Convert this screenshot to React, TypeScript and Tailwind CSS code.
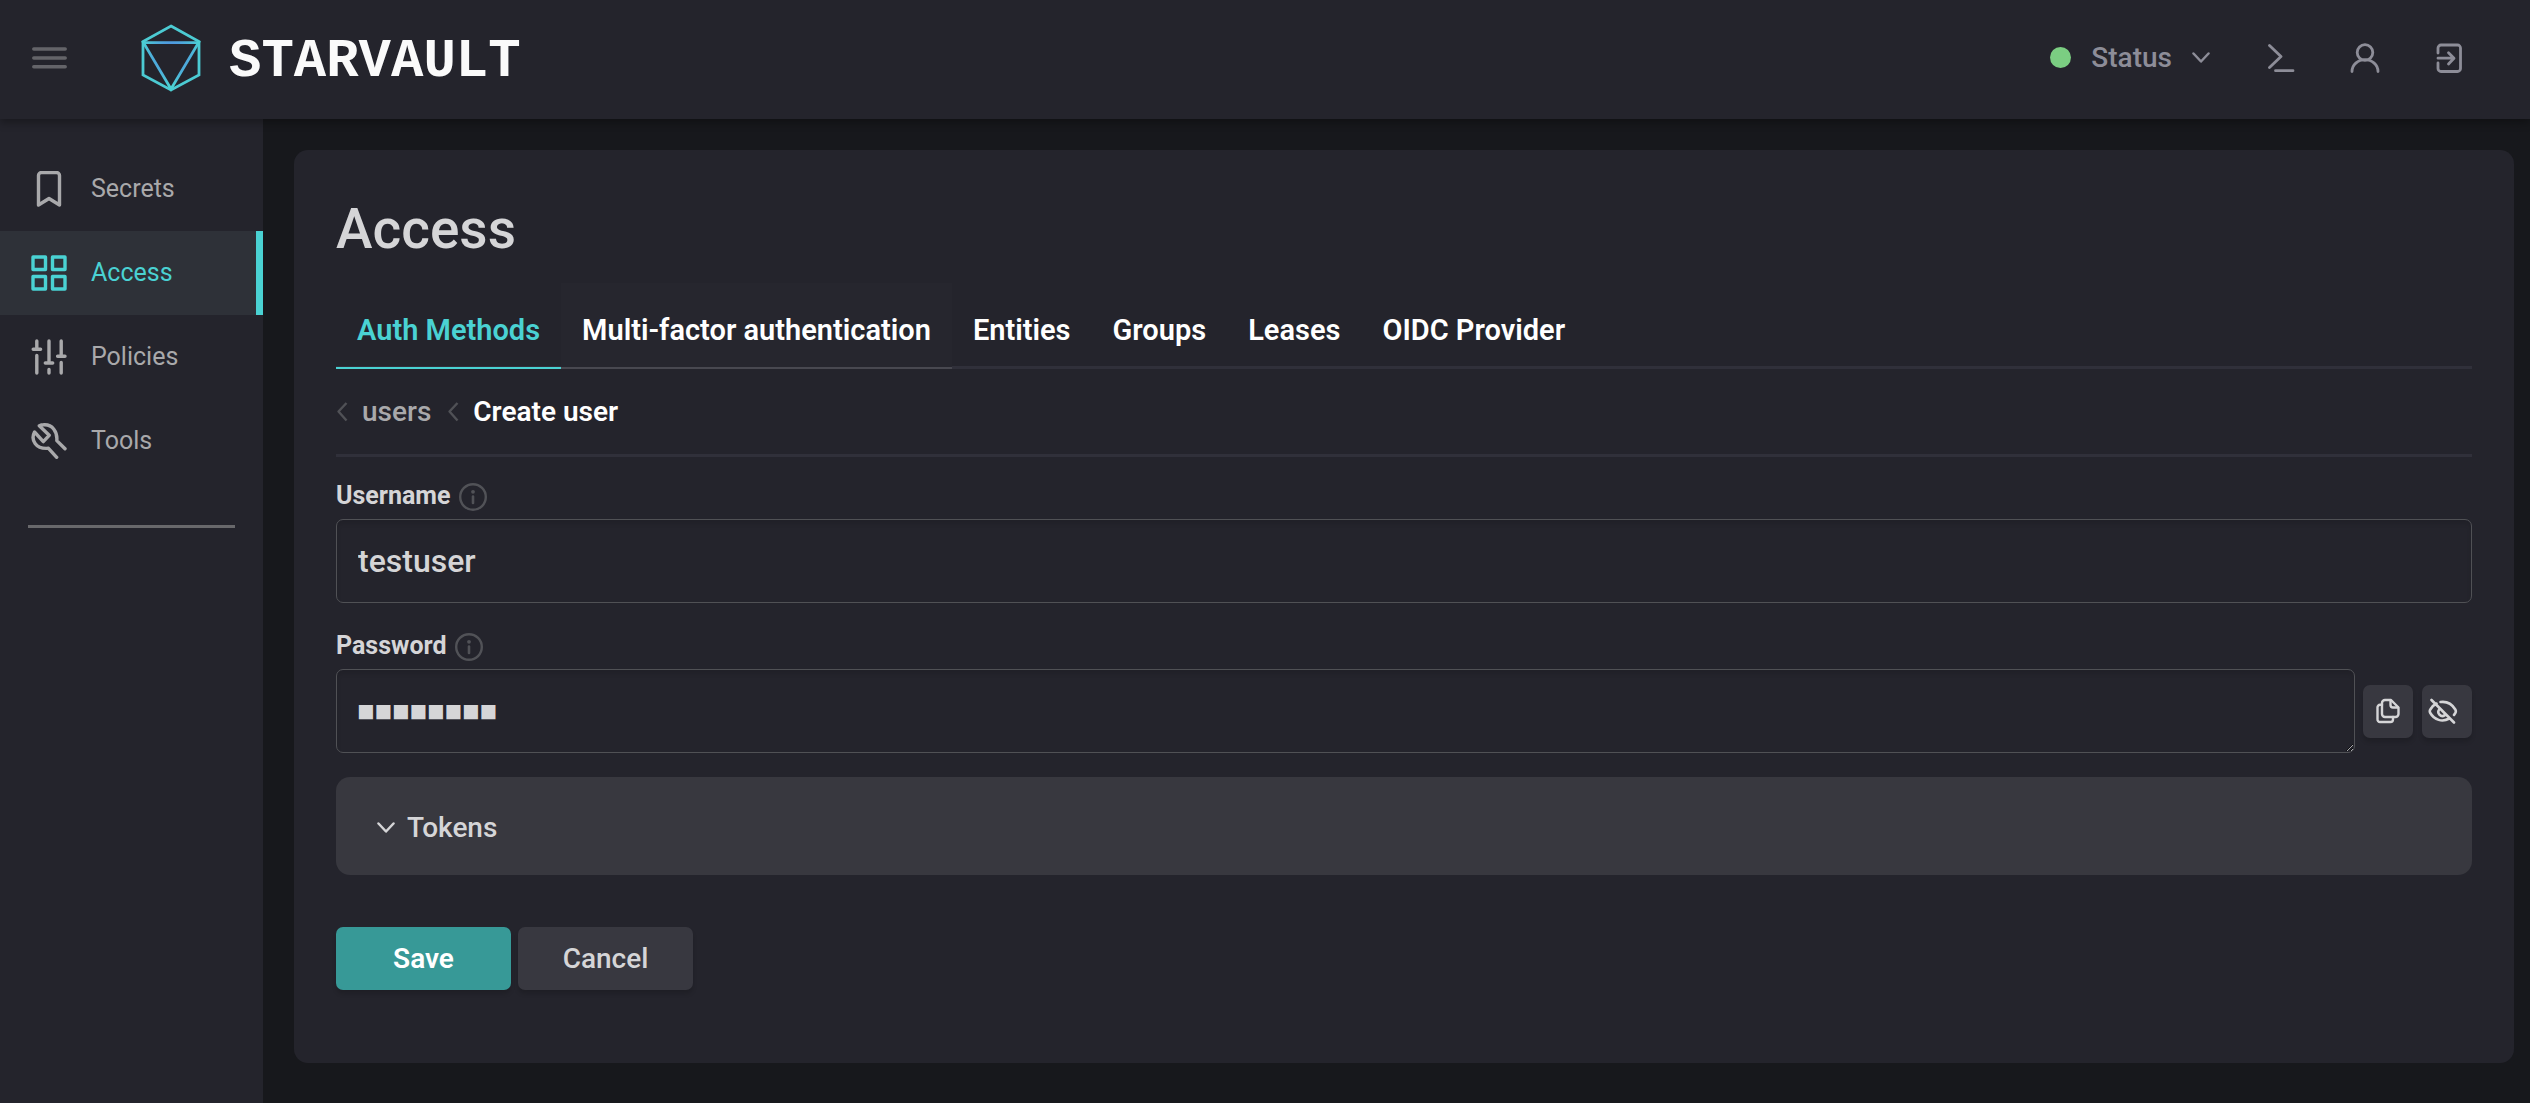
import { useState } from "react";
import type { ReactNode } from "react";
import clsx from "clsx";

interface IconProps {
    viewBox: string;
    className?: string;
    children: ReactNode;
}

function Icon({ viewBox, className, children }: IconProps) {
    return (
        <svg
            viewBox={viewBox}
            className={clsx("shrink-0", className)}
            fill="none"
            stroke="currentColor"
            strokeLinecap="round"
            strokeLinejoin="round"
            aria-hidden="true"
        >
            {children}
        </svg>
    );
}

function ChevronDown({ className }: { className?: string }) {
    return (
        <Icon viewBox="0 0 18 12" className={clsx("h-3 w-[18px]", className)}>
            <path d="M1.5 1.5 9 9.5l7.5-8" strokeWidth="2.5" />
        </Icon>
    );
}

function ChevronLeft() {
    return (
        <Icon viewBox="0 0 12 20" className="h-5 w-3 text-[#505156]">
            <path d="M10.5 1 2.5 9.5l8 9" strokeWidth="2.4" strokeLinecap="butt" />
        </Icon>
    );
}

function InfoIcon() {
    return (
        <Icon viewBox="0 0 28 28" className="size-7 text-[#515257]">
            <circle cx="14" cy="14" r="12.8" strokeWidth="2.4" />
            <path d="M14 13.5v6.5" strokeWidth="2.6" />
            <circle cx="14" cy="8.8" r="1.9" fill="currentColor" stroke="none" />
        </Icon>
    );
}

function Logo() {
    return (
        <svg viewBox="0 0 60 68" className="h-[68px] w-15 shrink-0" fill="none" aria-hidden="true">
            <defs>
                <radialGradient id="logo-fill" cx="30" cy="31" r="36" gradientUnits="userSpaceOnUse">
                    <stop offset="0.3" stopColor="#4f97e0" />
                    <stop offset="0.85" stopColor="#4bd0d2" />
                </radialGradient>
            </defs>
            <path d="M30 2 58 17.5V51L30 66 2 51V17.500z" stroke="#4ccbd3" strokeWidth="2.800" />
            <path d="M2.500 18.700h55L30 65z" stroke="url(#logo-fill)" strokeWidth="2.800" />
        </svg>
    );
}

const NAV = [
    {
        label: "Secrets",
        icon: <path d="M7.500 34V4.500a3 3 0 0 1 3-3h15a3 3 0 0 1 3 3V34L18 27.500z" />,
    },
    {
        label: "Access",
        icon: (
            <>
                <rect x="2" y="2" width="12.500" height="12.500" />
                <rect x="21.500" y="2" width="12.500" height="12.500" />
                <rect x="2" y="21.500" width="12.500" height="12.500" />
                <rect x="21.500" y="21.500" width="12.500" height="12.500" />
            </>
        ),
    },
    {
        label: "Policies",
        icon: <path d="M5.800 2v8M2.200 10.200h7.400M5.800 16.500V34M18 2v22M14.300 24h7.400M18 30.500V34M30.200 2v15M26.600 17.200H34M30.200 23.500V34" />,
    },
    {
        label: "Tools",
        icon: <path d="M34 25.800 25.800 17.600C26.600 9 21.500 1 12.500 1.800c-1.600.1-3 .5-4.200 1l9.900 9.500-5.900 6.300L3.500 9C-.5 16.500 4.500 26.500 17.500 25.300l8.200 9" />,
    },
];

const TABS = ["Auth Methods", "Multi-factor authentication", "Entities", "Groups", "Leases", "OIDC Provider"];

function Header() {
    return (
        <header className="relative z-10 flex h-[119px] items-center bg-[#24242c] pr-[66px] pb-1 pl-8 shadow-[0_4px_8px_rgba(0,0,0,0.3)]">
            <button type="button" aria-label="Toggle menu" className="text-[#646469]">
                <Icon viewBox="0 0 35 24" className="h-6 w-[35px]">
                    <path d="M1.800 3h31.400M1.800 12h31.400M1.800 20.800h31.400" strokeWidth="3.500" />
                </Icon>
            </button>

            <a href="#home" className="ml-[74px] flex items-center gap-7 text-[#fafafa]">
                <Logo />
                <span className="pt-2 font-['Liberation_Mono',monospace] text-[54px] leading-none font-bold">STARVAULT</span>
            </a>

            <div className="ml-auto flex items-center text-[#8d8d98]">
                <button type="button" className="flex items-center text-[28px] font-medium">
                    <span className="mr-5 size-[21px] rounded-full bg-[#7bce82]" />
                    Status
                    <ChevronDown className="ml-5" />
                </button>
                <button type="button" aria-label="Console" className="ml-[57px]">
                    <Icon viewBox="0 0 30 30" className="size-[30px]">
                        <path d="M2.500 2.500 14 13.500 2.500 24.500M8.500 27.700H26" strokeWidth="2.800" />
                    </Icon>
                </button>
                <button type="button" aria-label="User menu" className="ml-[53px]">
                    <Icon viewBox="0 0 30 30" className="size-[30px]">
                        <circle cx="15" cy="9.500" r="7.800" strokeWidth="2.800" />
                        <path d="M2 28.500a13 11.800 0 0 1 26 0" strokeWidth="2.800" />
                    </Icon>
                </button>
                <button type="button" aria-label="Log out" className="ml-[54px]">
                    <Icon viewBox="0 0 30 30" className="size-[30px]">
                        <path d="M4 10V5a3 3 0 0 1 3-3h16.500a3 3 0 0 1 3 3v20.500a3 3 0 0 1-3 3H7a3 3 0 0 1-3-3V20" strokeWidth="2.800" />
                        <path d="M4 15.200h15.500M14.500 9.700l5.500 5.500-5.500 5.800" strokeWidth="2.800" />
                    </Icon>
                </button>
            </div>
        </header>
    );
}

function Sidebar() {
    return (
        <nav className="w-[263px] shrink-0 bg-[#24242c] pt-7">
            {NAV.map(({ label, icon }) => (
                <a
                    key={label}
                    href={`#${label.toLowerCase()}`}
                    className={clsx(
                        "flex h-[84px] items-center gap-6 pl-[31px] text-[25px]",
                        label === "Access"
                            ? "border-r-[7px] border-[#4ad2d3] bg-[#2e3138] text-[#4ad2d3]"
                            : "text-[#a9a9ab]"
                    )}
                >
                    <Icon viewBox="0 0 36 36" className="size-9">
                        <g strokeWidth="3.400">{icon}</g>
                    </Icon>
                    {label}
                </a>
            ))}
            <hr className="mx-7 mt-[42px] border-t-3 border-[#68686b]" />
        </nav>
    );
}

function FieldLabel({ htmlFor, children }: { htmlFor: string; children: string }) {
    return (
        <label htmlFor={htmlFor} className="flex h-7 items-start gap-2 text-[25px] leading-[26px] font-bold text-[#d5d5d7]">
            {children}
            <InfoIcon />
        </label>
    );
}

export default function App() {
    const [username, setUsername] = useState("testuser");
    const [password, setPassword] = useState("password");

    return (
        <div className="flex min-h-screen flex-col bg-[#17181c] font-['Roboto',sans-serif]">
            <Header />

            <div className="flex flex-1">
                <Sidebar />

                <main className="mt-[31px] mr-4 mb-10 ml-[31px] min-w-0 flex-1 rounded-[14px] bg-[#24242c] px-[42px] text-[#d5d5d7]">
                    <h1 className="mt-11 text-[55px] leading-[70px] font-medium">Access</h1>

                    {/* Tabs */}
                    <div className="mt-[19px] flex shadow-[inset_0_-3px_0_#30303a]">
                        {TABS.map((tab, i) => (
                            <a
                                key={tab}
                                href="#tab"
                                className={clsx(
                                    "border-b-2 px-[21px] pt-[26px] pb-4 text-[29px] leading-[42px] font-semibold",
                                    i === 0 && "border-[#4ad2d3] text-[#4ad2d3]",
                                    i === 1 && "border-[#484850] bg-[#26262e] text-white",
                                    i > 1 && "border-transparent text-white"
                                )}
                            >
                                {tab}
                            </a>
                        ))}
                    </div>

                    {/* Breadcrumbs */}
                    <div className="flex h-22 items-center border-b-3 border-[#30303a] text-[28px] font-medium">
                        <ChevronLeft />
                        <a href="#users" className="mr-4 ml-[14px] text-[#a9a9ab]">users</a>
                        <ChevronLeft />
                        <span className="ml-[14px] font-semibold text-white">Create user</span>
                    </div>

                    <form className="pt-[26px]" onSubmit={e => e.preventDefault()}>
                        <FieldLabel htmlFor="username">Username</FieldLabel>
                        <input
                            id="username"
                            type="text"
                            value={username}
                            onChange={e => setUsername(e.target.value)}
                            className="mt-2 block h-[84px] w-full rounded-[7px] border border-[#505155] px-[21px] text-[32px] font-medium shadow-[inset_0_4px_4px_rgba(0,0,0,0.1)]"
                        />

                        <div className="mt-[30px]">
                            <FieldLabel htmlFor="password">Password</FieldLabel>
                            <div className="mt-2 flex items-center">
                                <textarea
                                    id="password"
                                    rows={1}
                                    value={password}
                                    onChange={e => setPassword(e.target.value)}
                                    className="h-[84px] min-w-0 flex-1 resize overflow-hidden rounded-[7px] border border-[#505155] px-5 py-5 font-['Liberation_Sans',sans-serif] text-[29px] leading-[42px] shadow-[inset_0_4px_4px_rgba(0,0,0,0.1)] [-webkit-text-security:square]"
                                />
                                <button type="button" aria-label="Copy" className="ml-2 flex h-[53px] w-[50px] items-center justify-center rounded-[7px] bg-[#383840] shadow-[0_4px_4px_rgba(0,0,0,0.15)]">
                                    <Icon viewBox="0 0 24 26" className="h-[26px] w-6">
                                        <path d="M14 2H9a3 3 0 0 0-3 3v11a3 3 0 0 0 3 3h10.500a3 3 0 0 0 3-3V9.500L15 2z" strokeWidth="2.400" />
                                        <path d="M14.500 2.500V7a2.500 2.500 0 0 0 2.500 2.500h5M6 6.800H4a2.500 2.500 0 0 0-2.500 2.500v12A2.500 2.500 0 0 0 4 24h10.500a2.500 2.500 0 0 0 2.500-2.500V19" strokeWidth="2.400" />
                                    </Icon>
                                </button>
                                <button type="button" aria-label="Show password" className="ml-[9px] flex h-[53px] w-[50px] items-center rounded-[7px] bg-[#383840] pl-[6px] shadow-[0_4px_4px_rgba(0,0,0,0.15)]">
                                    <Icon viewBox="0 0 30 26" className="h-[26px] w-[30px]">
                                        <path d="m3.500 2 22.500 22.500M12.500 4c6-.8 11.500 2 14.800 7.500.6 1 .6 2.500 0 3.500l-1.300 2M8.500 5.500C5.800 6.800 3.700 9 2.300 11.500c-.6 1-.6 2.500 0 3.500 4 7 12 9.500 19 5.500M11.200 11.500a4 4 0 0 0 5.600 5.600" strokeWidth="2.600" />
                                    </Icon>
                                </button>
                            </div>
                        </div>

                        <button type="button" aria-expanded="false" className="mt-6 flex h-[98px] w-full items-center rounded-[14px] bg-[#38383f] pt-1 pl-[41px] text-[28px] font-medium">
                            <ChevronDown />
                            <span className="ml-3">Tokens</span>
                        </button>

                        <div className="mt-[52px] flex gap-[7px] text-[28px]">
                            <button type="submit" className="h-[63px] w-[175px] rounded-[7px] bg-[#379997] font-semibold text-white shadow-[0_4px_4px_rgba(0,0,0,0.15)]">
                                Save
                            </button>
                            <button type="button" className="h-[63px] w-[175px] rounded-[7px] bg-[#383840] font-medium shadow-[0_4px_4px_rgba(0,0,0,0.15)]">
                                Cancel
                            </button>
                        </div>
                    </form>
                </main>
            </div>
        </div>
    );
}
